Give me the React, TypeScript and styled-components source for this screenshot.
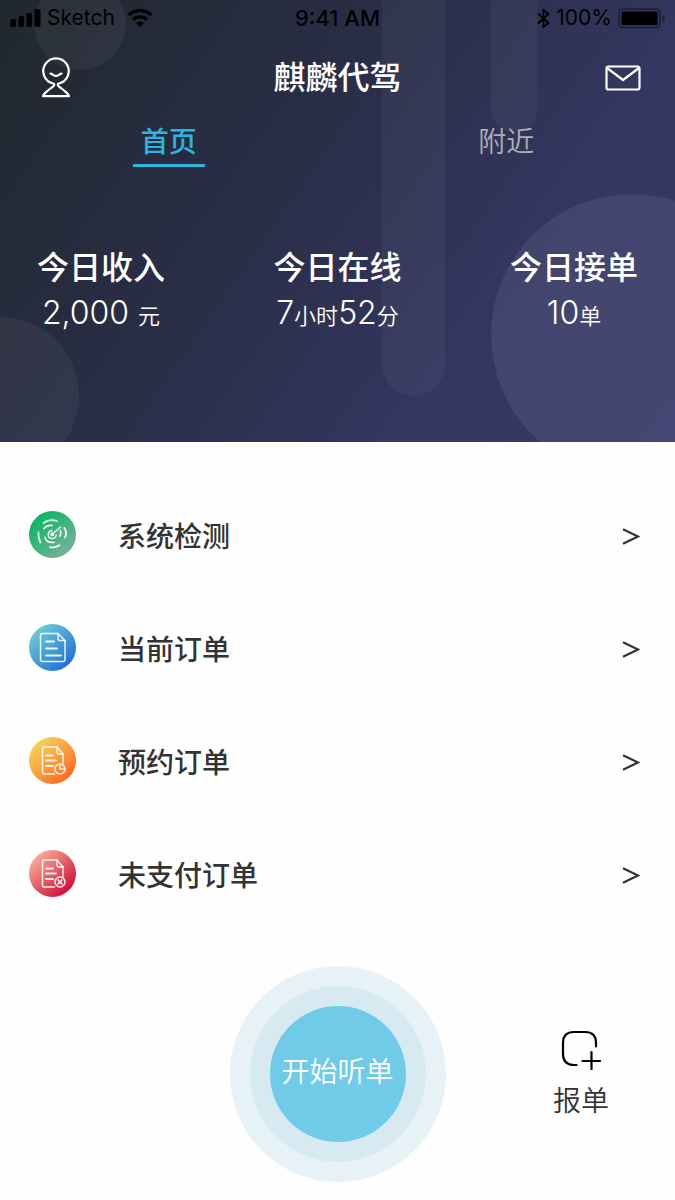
import React from 'react';
import styled, { createGlobalStyle } from 'styled-components';

const GlobalStyle = createGlobalStyle`
  * { box-sizing: border-box; }
  body {
    margin: 0;
    background: #fefefe;
    color: #333;
    font-family: Inter, "Noto Sans CJK SC", sans-serif;
  }
  button { font: inherit; color: inherit; border: 0; padding: 0; background: none; cursor: pointer; }
  a { color: inherit; text-decoration: none; }
  h1, h2, p, dl, dt, dd, ul { margin: 0; padding: 0; }
  svg { display: block; flex: none; }
`;

const Page = styled.div`
  min-height: 100vh;
`;

const Header = styled.header`
  position: relative;
  overflow: hidden;
  padding-bottom: 105px;
  color: #fff;
  background: linear-gradient(125deg, #20282d 0%, #2a2e48 42%, #343760 72%, #37396a 100%);
`;

const Shape = styled.span<{ $w: number; $h: number; $x: string; $y: number; $alpha: number }>`
  position: absolute;
  left: ${p => p.$x};
  top: ${p => p.$y}px;
  width: ${p => p.$w}px;
  height: ${p => p.$h}px;
  border-radius: 999px;
  background: rgba(255, 255, 255, ${p => p.$alpha});
`;

const StatusBar = styled.div`
  position: relative;
  display: grid;
  grid-template-columns: 1fr auto 1fr;
  align-items: center;
  height: 36px;
  padding: 0 10px;
  font-size: 21px;
  line-height: 36px;
  color: #000;
`;

const StatusGroup = styled.div<{ $end?: boolean }>`
  display: flex;
  align-items: center;
  justify-content: ${p => (p.$end ? 'flex-end' : 'flex-start')};
  gap: 6px;
`;

const Clock = styled.span`
  font-size: 22px;
  font-weight: 500;
`;

const TitleBar = styled.div`
  position: relative;
  display: grid;
  grid-template-columns: 1fr auto 1fr;
  align-items: center;
  height: 84px;
  padding: 0 34px;
`;

const Title = styled.h1`
  font-size: 32px;
  line-height: 48px;
  font-weight: 500;
`;

const IconButton = styled.button<{ $end?: boolean }>`
  justify-self: ${p => (p.$end ? 'end' : 'start')};
`;

const Tabs = styled.nav`
  position: relative;
  display: grid;
  grid-template-columns: 1fr 1fr;
  justify-items: center;
`;

const Tab = styled.a<{ $active?: boolean }>`
  min-width: 72px;
  height: 47px;
  text-align: center;
  font-size: 28px;
  line-height: 44px;
  font-weight: ${p => (p.$active ? 500 : 350)};
  color: ${p => (p.$active ? '#2cb4e2' : '#afafaf')};
  border-bottom: 3px solid ${p => (p.$active ? '#2cb4e2' : 'transparent')};
`;

const Stats = styled.dl`
  position: relative;
  display: flex;
  justify-content: space-between;
  padding: 77px 37px 0;
`;

const Stat = styled.div`
  text-align: center;
`;

const StatLabel = styled.dt`
  font-size: 32px;
  line-height: 48px;
  font-weight: 500;
`;

const StatValue = styled.dd`
  font-size: 32px;
  line-height: 42px;
  font-weight: 300;
`;

const Unit = styled.small`
  font-size: 22px;
  font-weight: 350;
`;

const Menu = styled.ul`
  list-style: none;
  padding: 36px 35px 0 29px;
`;

const MenuRow = styled.a`
  display: flex;
  align-items: center;
  height: 113px;
`;

const MenuText = styled.span`
  flex: 1;
  display: flex;
  align-items: center;
  justify-content: space-between;
  margin-left: 42px;
  padding-top: 4px;
  font-size: 28px;
  line-height: 42px;
  font-weight: 500;
`;

const Footer = styled.footer`
  display: grid;
  grid-template-columns: 1fr auto 1fr;
  align-items: center;
  padding: 36px 0 18px;
`;

const StartButton = styled.button`
  grid-column: 2;
  width: 136px;
  height: 136px;
  margin: 40px;
  padding-bottom: 8px;
  border-radius: 50%;
  background: #70cbe8;
  box-shadow: 0 0 0 20px #d7eaf2, 0 0 0 40px #e6f2f5;
  color: #fff;
  font-size: 28px;
  font-weight: 350;
  white-space: nowrap;
`;

const ReportButton = styled.button`
  justify-self: end;
  display: flex;
  flex-direction: column;
  align-items: center;
  gap: 10px;
  margin-right: 66px;
  padding-top: 4px;
  font-size: 28px;
  line-height: 42px;
  font-weight: 350;
`;

function SignalIcon() {
  return (
    <svg width="31" height="18" viewBox="0 0 31 18" aria-hidden="true">
      <rect x="0.5" y="10" width="5.5" height="8" rx="1.8" />
      <rect x="8.5" y="7" width="5.5" height="11" rx="1.8" />
      <rect x="16.5" y="4" width="5.5" height="14" rx="1.8" />
      <rect x="24.5" y="0" width="6" height="18" rx="1.8" />
    </svg>
  );
}

function WifiIcon() {
  return (
    <svg width="32" height="18" viewBox="-6 0 32 18" fill="none" stroke="#000" strokeWidth="3.2" aria-hidden="true">
      <path d="M1.6 6.2C8 .2 18 .2 24.4 6.2" />
      <path d="M6 10.6c4-3.7 10-3.7 14 0" />
      <path d="M9.2 14.1c2.2-2 5.4-2 7.6 0L13 18z" fill="#000" stroke="none" />
    </svg>
  );
}

function BluetoothIcon() {
  return (
    <svg width="13" height="21" viewBox="0 0 13 21" fill="none" stroke="#000" strokeWidth="1.8" aria-hidden="true">
      <path d="M1 5.500l10.500 9.500L6.500 19v-17l5 4L1 15.500" />
    </svg>
  );
}

function BatteryIcon() {
  return (
    <svg width="47" height="21" viewBox="0 0 47 21" aria-hidden="true">
      <rect x="1" y="1" width="41" height="18.500" rx="4" fill="none" stroke="#000" strokeOpacity="0.45" strokeWidth="1.600" />
      <rect x="3.500" y="3.500" width="36" height="13.500" rx="1" />
      <path d="M44.500 7c3 1.500 3 5.500 0 7z" opacity="0.45" />
    </svg>
  );
}

function PersonIcon() {
  return (
    <svg width="44" height="42" viewBox="-6 0 44 42" fill="none" stroke="#fff" strokeWidth="2.200" strokeLinecap="round" strokeLinejoin="round" aria-hidden="true">
      <path d="M14.300 27.500Q14.300 26.700 13.300 26.500A12.700 12.700 0 1 1 18.700 26.500Q17.700 26.700 17.700 27.500C17.700 29.500 21 31 23.500 33C26.500 35.500 29 37.200 29 39.200H3C3 37.200 5.500 35.500 8.500 33C11 31 14.300 29.500 14.300 27.500z" />
      <path d="M10.500 16.700q1.500.2 2.600 1.100c1.700 1.300 4.100 1.300 5.800 0q1.100-.9 2.600-1.100" />
    </svg>
  );
}

function MailIcon() {
  return (
    <svg width="36" height="26" viewBox="0 0 36 26" fill="none" stroke="#fff" strokeWidth="2.200" strokeLinejoin="round" aria-hidden="true">
      <rect x="1.500" y="1.500" width="33" height="23" rx="2" />
      <path d="M2 3l16 12L34 3" />
    </svg>
  );
}

function ChevronIcon() {
  return (
    <svg width="18" height="17" viewBox="0 0 18 17" fill="none" stroke="#333" strokeWidth="2.200" aria-hidden="true">
      <path d="M1 1.300L16 8.500 1 15.700" />
    </svg>
  );
}

type Kind = 'radar' | 'current' | 'booked' | 'unpaid';

const gradients: Record<Kind, [string, string]> = {
  radar: ['#05b862', '#7ab09a'],
  current: ['#6ccbd9', '#2270d2'],
  booked: ['#f9d45c', '#fb6820'],
  unpaid: ['#fcae98', '#cd0c38'],
};

function Glyph({ kind }: { kind: Kind }) {
  if (kind === 'radar') {
    return (
      <>
        <g strokeWidth="1.800">
          <path d="M14.500 12Q20.500 7.500 28 10.200" />
          <path d="M15 17.500C17 14.800 19.500 14 23 14.500" />
          <path d="M9.400 21.500Q9 27 11.500 31.500" />
          <path d="M35.300 17Q38.500 22 36 26.500" />
          <path d="M21 36.200Q26 37.200 30.500 34.200" />
          <path d="M16 26.500C17 30 20 32 25 31.300" />
          <path d="M31.500 19.500Q32.300 22 31 25" />
        </g>
        <path d="M23.300 23.300L31.500 16M23 19.500a4 4 0 1 0 4.200 4.500" strokeWidth="1.500" />
        <circle cx="23.300" cy="23.300" r="1.300" fill="#fff" />
      </>
    );
  }
  if (kind === 'current') {
    return (
      <>
        <path d="M13 9.500h16l7 7v19q0 2-2 2H13.500q-2 0-2-2V11.500q0-2 1.500-2z" />
        <path d="M29 9.500v5q0 2 2 2h5" />
        <path d="M17 17.500h8M17 24.500h11M17 31.500h15" strokeWidth="1.800" />
      </>
    );
  }
  return (
    <>
      <path d="M25.500 37H15q-1.500 0-1.500-1.500v-24Q13.500 10 15 10h13l6 7v9.500" />
      <path d="M28 10v5q0 2 2 2h4" />
      <path d="M17 18.500h7M17 23.500h10M17 29h7" strokeWidth="1.800" />
      <circle cx="31" cy="32" r="5" />
      {kind === 'booked'
        ? <path d="M31 28.500V32h3.500" />
        : <path d="M29.200 30.200l3.600 3.600M32.800 30.200l-3.600 3.600" strokeWidth="1.700" />}
    </>
  );
}

function MenuIcon({ kind }: { kind: Kind }) {
  const [from, to] = gradients[kind];
  return (
    <svg width="47" height="47" viewBox="0 0 47 47" aria-hidden="true">
      <defs>
        <linearGradient id={kind} x1="0.15" y1="0.1" x2="0.85" y2="0.9">
          <stop offset="0" stopColor={from} />
          <stop offset="1" stopColor={to} />
        </linearGradient>
      </defs>
      <circle cx="23.500" cy="23.500" r="23.500" fill={`url(#${kind})`} />
      <g fill="none" stroke="#fff" strokeOpacity="0.9" strokeWidth="1.500" strokeLinecap="round" strokeLinejoin="round">
        <Glyph kind={kind} />
      </g>
    </svg>
  );
}

function ReportIcon() {
  return (
    <svg width="40" height="40" viewBox="0 0 40 40" fill="none" stroke="#000" strokeWidth="2.200" strokeLinecap="round" aria-hidden="true">
      <path d="M15.500 35H13Q2 35 2 24V13Q2 2 13 2H24Q35 2 35 13V16.500" />
      <path d="M30.500 22V39M21.500 31H39" />
    </svg>
  );
}

const menu: { kind: Kind; label: string }[] = [
  { kind: 'radar', label: '系统检测' },
  { kind: 'current', label: '当前订单' },
  { kind: 'booked', label: '预约订单' },
  { kind: 'unpaid', label: '未支付订单' },
];

export default function App() {
  return (
    <Page>
      <GlobalStyle />
      <Header>
        <Shape $w={92} $h={92} $x="34px" $y={-22} $alpha={0.05} />
        <Shape $w={158} $h={158} $x="-79px" $y={317} $alpha={0.05} />
        <Shape $w={63} $h={460} $x="calc(50% + 44px)" $y={-64} $alpha={0.04} />
        <Shape $w={46} $h={200} $x="calc(100% - 184px)" $y={-68} $alpha={0.04} />
        <Shape $w={282} $h={282} $x="calc(100% - 184px)" $y={194} $alpha={0.07} />

        <StatusBar>
          <StatusGroup>
            <SignalIcon />
            <span>Sketch</span>
            <WifiIcon />
          </StatusGroup>
          <Clock>9:41 AM</Clock>
          <StatusGroup $end>
            <BluetoothIcon />
            <span>100%</span>
            <BatteryIcon />
          </StatusGroup>
        </StatusBar>

        <TitleBar>
          <IconButton type="button" aria-label="个人中心"><PersonIcon /></IconButton>
          <Title>麒麟代驾</Title>
          <IconButton type="button" aria-label="消息" $end><MailIcon /></IconButton>
        </TitleBar>

        <Tabs>
          <Tab href="#home" $active aria-current="page">首页</Tab>
          <Tab href="#nearby">附近</Tab>
        </Tabs>

        <Stats>
          <Stat>
            <StatLabel>今日收入</StatLabel>
            <StatValue>2,000 <Unit>元</Unit></StatValue>
          </Stat>
          <Stat>
            <StatLabel>今日在线</StatLabel>
            <StatValue>7<Unit>小时</Unit>52<Unit>分</Unit></StatValue>
          </Stat>
          <Stat>
            <StatLabel>今日接单</StatLabel>
            <StatValue>10<Unit>单</Unit></StatValue>
          </Stat>
        </Stats>
      </Header>

      <main>
        <Menu>
          {menu.map(item => (
            <li key={item.kind}>
              <MenuRow href={`#${item.kind}`}>
                <MenuIcon kind={item.kind} />
                <MenuText>
                  {item.label}
                  <ChevronIcon />
                </MenuText>
              </MenuRow>
            </li>
          ))}
        </Menu>
      </main>

      <Footer>
        <StartButton type="button">开始听单</StartButton>
        <ReportButton type="button">
          <ReportIcon />
          报单
        </ReportButton>
      </Footer>
    </Page>
  );
}
